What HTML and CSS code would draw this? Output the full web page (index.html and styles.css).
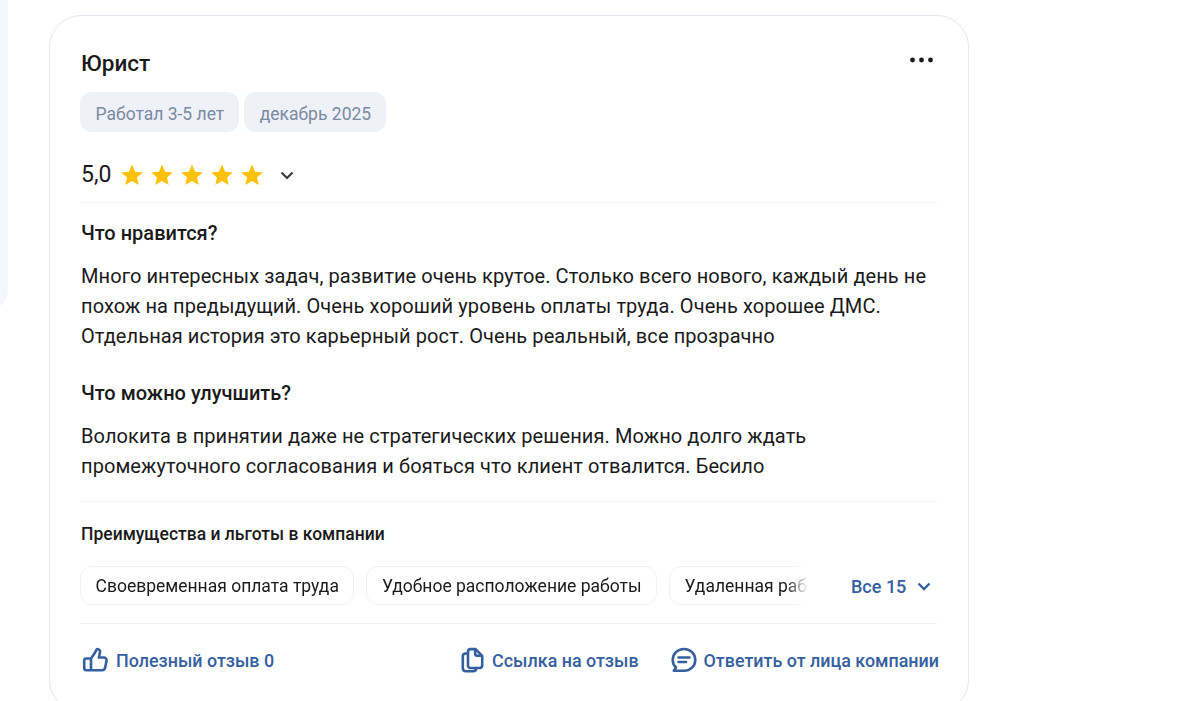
FILE: index.html
```html
<!DOCTYPE html>
<html lang="ru">
<head>
  <meta charset="UTF-8">
  <title>Отзыв</title>
  <link rel="stylesheet" href="styles.css">
</head>
<body>
  <div class="page">
    <div class="side-panel"></div>
    <div class="review">
      <div class="review-head">
        <div class="job-title">Юрист</div>
        <svg class="more" width="23" height="6" viewBox="0 0 23 6"><circle cx="2.500" cy="3" r="2.400"/><circle cx="11.500" cy="3" r="2.400"/><circle cx="20.500" cy="3" r="2.400"/></svg>
      </div>
      <div class="tags">
        <span class="tag">Работал 3-5 лет</span>
        <span class="tag">декабрь 2025</span>
      </div>
      <div class="rating">
        <span class="score">5,0</span>
        <span class="stars">
          <svg width="24" height="24" viewBox="0 0 24 24"><path d="M12 1.500l3.100 7.200 7.700.7-5.800 5.100 1.700 7.600L12 18.100l-6.700 4 1.700-7.600-5.800-5.100 7.700-.7z"/></svg>
          <svg width="24" height="24" viewBox="0 0 24 24"><path d="M12 1.500l3.100 7.200 7.700.7-5.800 5.100 1.700 7.600L12 18.100l-6.700 4 1.700-7.600-5.800-5.100 7.700-.7z"/></svg>
          <svg width="24" height="24" viewBox="0 0 24 24"><path d="M12 1.500l3.100 7.200 7.700.7-5.800 5.100 1.700 7.600L12 18.100l-6.700 4 1.700-7.600-5.800-5.100 7.700-.7z"/></svg>
          <svg width="24" height="24" viewBox="0 0 24 24"><path d="M12 1.500l3.100 7.200 7.700.7-5.800 5.100 1.700 7.600L12 18.100l-6.700 4 1.700-7.600-5.800-5.100 7.700-.7z"/></svg>
          <svg width="24" height="24" viewBox="0 0 24 24"><path d="M12 1.500l3.100 7.200 7.700.7-5.800 5.100 1.700 7.600L12 18.100l-6.700 4 1.700-7.600-5.800-5.100 7.700-.7z"/></svg>
        </span>
        <svg class="rating-arrow" width="14" height="9" viewBox="0 0 14 9"><path d="M1.500 1.500L7 7l5.500-5.500"/></svg>
      </div>
      <div class="text-block">
        <h3>Что нравится?</h3>
        <p>Много интересных задач, развитие очень крутое. Столько всего нового, каждый день не похож на предыдущий. Очень хороший уровень оплаты труда. Очень хорошее ДМС. Отдельная история это карьерный рост. Очень реальный, все прозрачно</p>
        <h3>Что можно улучшить?</h3>
        <p>Волокита в принятии даже не стратегических решения. Можно долго ждать промежуточного согласования и бояться что клиент отвалится. Бесило</p>
      </div>
      <div class="benefits">
        <div class="benefits-title">Преимущества и льготы в компании</div>
        <div class="benefits-row">
          <div class="benefits-list">
            <span class="benefit">Своевременная оплата труда</span>
            <span class="benefit">Удобное расположение работы</span>
            <span class="benefit">Удаленная работа</span>
          </div>
          <div class="benefits-all">Все 15
            <svg width="14" height="9" viewBox="0 0 14 9"><path d="M1.500 1.500L7 7l5.500-5.500"/></svg>
          </div>
        </div>
      </div>
      <div class="actions">
        <div class="action action-like">
          <svg width="26" height="26" viewBox="0 0 26 26"><path d="M9 11.500l3.600-5.200c.8-1.200 1.200-2.400 1.700-3.300.9-1.400 3.300-.9 3.700 1 .2 1-.1 2-.4 3.200l-.7 3.300h4.900c1.900 0 3 1.500 2.700 3.200l-1.300 6.900c-.3 1.500-1.500 2.600-3 2.600H4.300c-1.200 0-2.100-.9-2.100-2.100v-7.500c0-1.200.9-2.100 2.100-2.100H9v11.700"/></svg>
          <span>Полезный отзыв 0</span>
        </div>
        <div class="action action-link">
          <svg width="26" height="26" viewBox="0 0 26 26"><path d="M8 6.500H5.500c-1.500 0-2.700 1.200-2.700 2.700V21c0 1.900 1.400 3.200 3.200 3.200h7c1.900 0 3.200-1.300 3.200-3.200"/><path d="M8 4.500c0-1.400 1-2.400 2.400-2.400h5.100l6.700 6.700v9.800c0 1.400-1 2.400-2.400 2.400h-9.400C9 21 8 20 8 18.600z"/><path d="M15.200 2.500v4.300c0 1.200.8 2 2 2h4.600"/></svg>
          <span>Ссылка на отзыв</span>
        </div>
        <div class="action action-reply">
          <svg width="26" height="26" viewBox="0 0 26 26"><path d="M13 2c6.300 0 11.300 4.800 11.300 10.900S19.300 23.800 13 23.800H2.800l2.200-3.300C2.900 18.500 1.700 15.900 1.700 12.900 1.700 6.800 6.700 2 13 2z"/><path d="M7.500 10.500h11M7.500 15h7.500"/></svg>
          <span>Ответить от лица компании</span>
        </div>
      </div>
    </div>
  </div>
</body>
</html>
```

FILE: styles.css
```css
* {
  box-sizing: border-box;
}

html, body {
  height: 100%;
}

body {
  margin: 0;
  background: #fff;
  font-family: Roboto, "Liberation Sans", sans-serif;
  color: #1a1a1a;
  overflow: hidden;
}

.page {
  display: flex;
  align-items: flex-start;
}

.side-panel {
  width: 20px;
  height: 310px;
  margin-left: -12px;
  flex-shrink: 0;
  background: #f5f6fb;
  border-bottom-right-radius: 20px;
}

.review {
  width: 920px;
  margin: 15px 0 0 41px;
  padding: 32px 31px 38px 30px;
  border: 1px solid #e3e7f1;
  border-radius: 32px;
  background: #fff;
}

.review-head {
  display: flex;
  justify-content: space-between;
  align-items: flex-start;
}

.job-title {
  padding-left: 1px;
  font-size: 22.500px;
  line-height: 30px;
  font-weight: 500;
}

.more {
  margin: 9px 4px 0 0;
  fill: #1a1a1a;
}

.tags {
  display: flex;
  gap: 5px;
  margin-top: 14px;
}

.tag {
  height: 40px;
  padding: 0 15px 0 15.500px;
  border-radius: 12px;
  background: #eef1f8;
  color: #7a8aa0;
  font-size: 17.500px;
  line-height: 44px;
}

.rating {
  display: flex;
  align-items: center;
  height: 30px;
  margin-top: 28px;
}

.score {
  width: 40px;
  padding-left: 1px;
  font-size: 23px;
  line-height: 30px;
}

.stars {
  display: flex;
  gap: 6px;
}

.stars svg {
  fill: #ffc107;
}

.rating-arrow {
  margin-left: 16px;
  fill: none;
  stroke: #3c3c3c;
  stroke-width: 2.200;
}

.text-block {
  margin-top: 12px;
  padding: 15px 0 0 1px;
  border-top: 1px solid #f1f3f8;
}

.text-block h3 {
  margin: 0;
  font-size: 20px;
  line-height: 30px;
  font-weight: 500;
}

.text-block p {
  margin: 13px 0 27px;
  font-size: 20px;
  line-height: 30px;
  letter-spacing: 0.085px;
}

.benefits {
  margin-top: -7px;
  padding-top: 17px;
  border-top: 1px solid #f1f3f8;
}

.benefits-title {
  padding-left: 1px;
  font-size: 17.500px;
  line-height: 30px;
  font-weight: 500;
}

.benefits-row {
  display: flex;
  align-items: center;
  margin-top: 17px;
}

.benefits-list {
  display: flex;
  gap: 12px;
  width: 728px;
  overflow: hidden;
  -webkit-mask-image: linear-gradient(to right, #000 97%, transparent 100%);
  mask-image: linear-gradient(to right, #000 97%, transparent 100%);
}

.benefit {
  flex-shrink: 0;
  height: 39px;
  padding: 0 14.500px;
  border: 1px solid #eef1f8;
  border-radius: 12px;
  font-size: 17.500px;
  line-height: 38px;
  white-space: nowrap;
}

.benefits-all {
  display: flex;
  align-items: center;
  gap: 11px;
  margin: 2px 0 0 43px;
  color: #35609f;
  font-size: 18px;
  font-weight: 500;
}

.benefits-all svg {
  fill: none;
  stroke: #35609f;
  stroke-width: 2.400;
}

.actions {
  display: flex;
  align-items: center;
  margin-top: 18px;
  padding-top: 23px;
  border-top: 1px solid #f1f3f8;
}

.action {
  display: flex;
  align-items: center;
  gap: 6px;
  color: #35609f;
  font-size: 17.900px;
  font-weight: 500;
  white-space: nowrap;
}

.action svg {
  fill: none;
  stroke: #35609f;
  stroke-width: 2.600;
  stroke-linejoin: round;
  stroke-linecap: round;
  flex-shrink: 0;
}

.action-like {
  gap: 8px;
  padding-left: 2px;
}

.action-link {
  margin-left: auto;
}

.action-reply {
  gap: 7px;
  margin: 0 -2px 0 32px;
}
```
